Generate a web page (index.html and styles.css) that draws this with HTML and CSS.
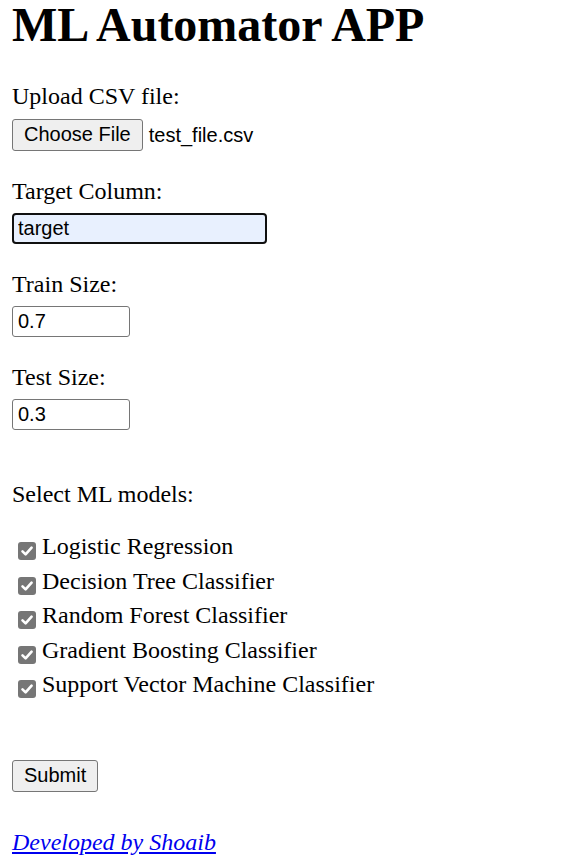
FILE: index.html
```html
<!DOCTYPE html>
<html lang="en">
<head>
<meta charset="utf-8">
<title>ML Automator APP</title>
<link rel="stylesheet" href="styles.css">
</head>
<body>
<h1 class="title">ML Automator APP</h1>
<form class="form">
  <div class="field field-first">
    <label class="label">Upload CSV file:</label>
    <div class="file-row">
      <button type="button" class="btn">Choose File</button>
      <span class="file-name">test_file.csv</span>
    </div>
  </div>
  <div class="field">
    <label class="label" for="target">Target Column:</label>
    <input id="target" class="input input-wide input-focus" type="text" value="target">
  </div>
  <div class="field">
    <label class="label" for="train">Train Size:</label>
    <input id="train" class="input input-small" type="text" value="0.7">
  </div>
  <div class="field">
    <label class="label" for="test">Test Size:</label>
    <input id="test" class="input input-small" type="text" value="0.3">
  </div>
  <div class="models">
    <div class="label">Select ML models:</div>
    <div class="checks">
      <div class="check-row"><span class="cb"><svg viewBox="0 0 18 18" width="18" height="18"><path d="M4.5 9.3 L7.6 12.4 L13.6 5.6" fill="none" stroke="#fff" stroke-width="2.6" stroke-linecap="round" stroke-linejoin="round"/></svg></span>Logistic Regression</div>
      <div class="check-row"><span class="cb"><svg viewBox="0 0 18 18" width="18" height="18"><path d="M4.5 9.3 L7.6 12.4 L13.6 5.6" fill="none" stroke="#fff" stroke-width="2.6" stroke-linecap="round" stroke-linejoin="round"/></svg></span>Decision Tree Classifier</div>
      <div class="check-row"><span class="cb"><svg viewBox="0 0 18 18" width="18" height="18"><path d="M4.5 9.3 L7.6 12.4 L13.6 5.6" fill="none" stroke="#fff" stroke-width="2.6" stroke-linecap="round" stroke-linejoin="round"/></svg></span>Random Forest Classifier</div>
      <div class="check-row"><span class="cb"><svg viewBox="0 0 18 18" width="18" height="18"><path d="M4.5 9.3 L7.6 12.4 L13.6 5.6" fill="none" stroke="#fff" stroke-width="2.6" stroke-linecap="round" stroke-linejoin="round"/></svg></span>Gradient Boosting Classifier</div>
      <div class="check-row"><span class="cb"><svg viewBox="0 0 18 18" width="18" height="18"><path d="M4.5 9.3 L7.6 12.4 L13.6 5.6" fill="none" stroke="#fff" stroke-width="2.6" stroke-linecap="round" stroke-linejoin="round"/></svg></span>Support Vector Machine Classifier</div>
    </div>
  </div>
  <div class="submit-row">
    <button type="button" class="btn">Submit</button>
  </div>
</form>
<a class="credit" href="#">Developed by Shoaib</a>
</body>
</html>
```
FILE: styles.css
```css
html, body {
  margin: 0;
  padding: 0;
  background: #fff;
}
body {
  padding: 0 12px;
  font-family: "Liberation Serif", "Times New Roman", serif;
  font-size: 24px;
  color: #000;
}
.title {
  margin: 0;
  font-size: 48px;
  line-height: 50px;
  font-weight: bold;
}
.form {
  display: flex;
  flex-direction: column;
}
.field {
  display: flex;
  flex-direction: column;
  align-items: flex-start;
  gap: 8px;
  margin-top: 26px;
}
.field-first {
  margin-top: 32px;
  gap: 9px;
}
.label {
  display: block;
  line-height: 28px;
  height: 28px;
}
.file-row {
  display: flex;
  align-items: center;
  gap: 6px;
}
.btn {
  box-sizing: border-box;
  font-family: "Liberation Sans", Arial, sans-serif;
  font-size: 20px;
  height: 32px;
  padding: 0 11px 2px;
  background: #efefef;
  color: #000;
  border: 1px solid #767676;
  border-radius: 3px;
  line-height: 28px;
}
.file-name {
  font-family: "Liberation Sans", Arial, sans-serif;
  font-size: 20px;
  line-height: 32px;
}
.input {
  box-sizing: border-box;
  height: 31px;
  font-family: "Liberation Sans", Arial, sans-serif;
  font-size: 20px;
  color: #000;
  border: 1px solid #767676;
  border-radius: 3px;
  padding: 0 5px;
  margin: 0;
  background: #fff;
}
.input-wide {
  width: 255px;
}
.input-small {
  width: 118px;
}
.input-focus {
  border: 2px solid #101010;
  border-radius: 4px;
  padding: 0 4px;
  background: #e8f0fe;
  outline: none;
}
.models {
  margin-top: 50px;
  display: flex;
  flex-direction: column;
}
.checks {
  margin-top: 21px;
  display: flex;
  flex-direction: column;
}
.check-row {
  line-height: 34.5px;
  height: 34.5px;
  white-space: nowrap;
}
.cb {
  display: inline-block;
  box-sizing: border-box;
  width: 18px;
  height: 18px;
  margin: 0 6px 0 6px;
  background: #767676;
  border-radius: 3px;
  vertical-align: -6px;
}
.cb svg {
  display: block;
}
.submit-row {
  margin-top: 58px;
}
.credit {
  display: inline-block;
  margin-top: 36px;
  line-height: 28px;
  font-style: italic;
  color: #0000ee;
  text-decoration: underline;
}
```
